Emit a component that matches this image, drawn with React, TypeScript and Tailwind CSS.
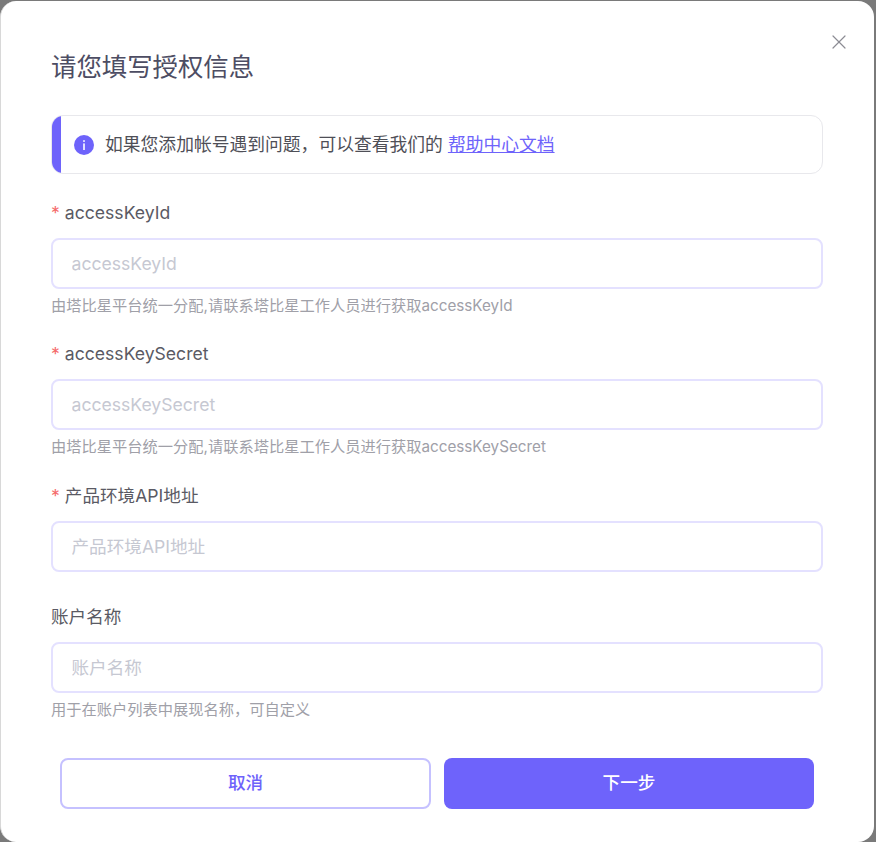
import { X } from 'lucide-react'

const font = "font-['Inter','Noto_Sans_CJK_SC',sans-serif]"

type FieldProps = {
  label: string
  required?: boolean
  help?: string
  className: string
}

function Field({ label, required, help, className }: FieldProps) {
  return (
    <div className={className}>
      <label className="flex h-6 items-center text-[17.6px] leading-6 text-[#5a5a64]">
        {required && <span className="mr-[5px] text-[#f56c6c]">*</span>}
        {label}
      </label>
      <input
        placeholder={label}
        className="mt-[13px] block h-[51px] w-full rounded-lg border-2 border-[#e4e1ff] bg-white px-[18.5px] text-[17.6px] text-[#55555f] outline-none placeholder:text-[#c6c8d2]"
      />
      {help && <p className="mt-[7px] h-5 text-[15.25px] leading-5 text-[#a0a0a8]">{help}</p>}
    </div>
  )
}

export default function App() {
  return (
    <div className={`${font} h-[842px] w-[876px] overflow-hidden bg-[#7a7a7a] pt-px pr-[2px]`}>
      <div className="relative h-[841px] w-[874px] rounded-2xl border-l border-[#d8d8d8] bg-white px-[50px] pt-[48px]">
        <button className="absolute top-[29px] right-[23px] text-[#8c8c94]">
          <X size={24} strokeWidth={1.2} />
        </button>
        <h2 className="h-[36px] text-[25.4px] leading-[36px] font-normal text-[#4d4d63]">请您填写授权信息</h2>

        <div className="mt-[30px] flex h-[59px] w-[772px] items-center overflow-hidden rounded-xl border border-[#e8e8ec]">
          <div className="-my-px -ml-px h-[59px] w-[10px] shrink-0 bg-[#6e63fb]" />
          <svg width="20" height="20" viewBox="0 0 20 20" className="ml-[13px] shrink-0">
            <circle cx="10" cy="10" r="10" fill="#6e63fb" />
            <rect x="9.2" y="8.4" width="1.6" height="6.6" fill="#fff" />
            <rect x="9.2" y="5.2" width="1.6" height="1.7" fill="#fff" />
          </svg>
          <p className="mt-px ml-[11px] text-[17.8px] text-[#4f4f57]">
            如果您添加帐号遇到问题，可以查看我们的{' '}
            <a className="text-[#6e63fb] underline">帮助中心文档</a>
          </p>
        </div>

        <Field
          className="mt-[27px] w-[772px]"
          label="accessKeyId"
          required
          help="由塔比星平台统一分配,请联系塔比星工作人员进行获取accessKeyId"
        />
        <Field
          className="mt-[26px] w-[772px]"
          label="accessKeySecret"
          required
          help="由塔比星平台统一分配,请联系塔比星工作人员进行获取accessKeySecret"
        />
        <Field className="mt-[27px] w-[772px]" label="产品环境API地址" required />
        <Field className="mt-[33px] w-[772px]" label="账户名称" help="用于在账户列表中展现名称，可自定义" />

        <div className="mt-[38px] ml-[9px] flex gap-[13px]">
          <button className="h-[51px] w-[371px] shrink-0 rounded-lg border-2 border-[#c5c1ff] bg-white text-[17.6px] font-medium text-[#6e63fb]">
            取消
          </button>
          <button className="h-[51px] w-[370px] shrink-0 rounded-lg bg-[#6e63fb] text-[17.6px] font-medium text-white">
            下一步
          </button>
        </div>
      </div>
    </div>
  )
}
